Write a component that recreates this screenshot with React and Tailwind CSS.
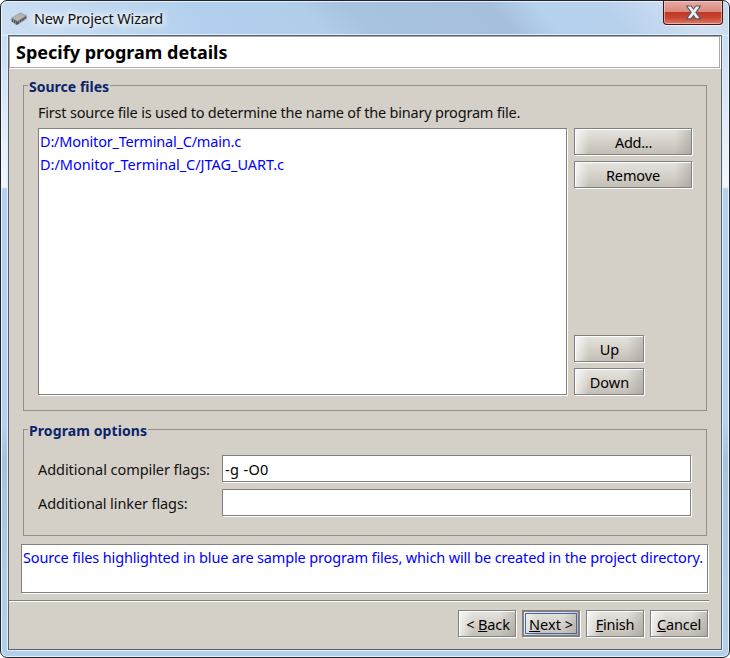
import React from "react";

function Button({ className = "", focused = false, children }) {
  return (
    <button
      className={`relative h-[27px] shrink-0 border border-[#808080] bg-[linear-gradient(90deg,rgba(255,255,255,0.7)_0px,rgba(255,255,255,0)_14px),linear-gradient(270deg,rgba(148,144,135,0.42)_0px,rgba(160,156,148,0)_16px),linear-gradient(180deg,#e6e4df_0%,#d8d4cd_45%,#c3beb5_100%)] text-center text-[14.5px] leading-[25px] text-black shadow-[1px_1px_0_#fff,inset_1px_1px_0_#fff] ${className}`}
    >
      {focused && (
        <span className="pointer-events-none absolute inset-0 border border-[#808080]">
          <span className="absolute inset-px border border-[#4468b4]" />
        </span>
      )}
      <span className="relative top-px">{children}</span>
    </button>
  );
}

function Group({ title, titleClass, className, children }) {
  return (
    <section className={`relative ml-[14px] w-[684px] border border-[#919089] ${className}`}>
      <h2
        className={`absolute -top-[9px] left-1 h-5 whitespace-nowrap bg-[#d4d0c8] pl-px text-[14px] leading-5 font-bold text-[#0a246a] ${titleClass}`}
      >
        {title}
      </h2>
      {children}
    </section>
  );
}

function TitleBar() {
  return (
    <header className="flex h-[33px] items-start">
      <svg className="mt-[11px] ml-[10px] shrink-0" width="16" height="14" viewBox="0 0 16 14">
        <path d="M.5 7 9.5 1.2 15.5 4v2.5L6 13 .5 9.5Z" fill="#505050" />
        <path d="M.5 6.2 9.2 1 15.6 3.6 6.6 9.4Z" fill="#b4b4b4" stroke="#8a8a8a" strokeWidth=".6" />
        <path d="M2.5 8v2.8M4.7 9.4v3M8.5 9v2.6M10.8 7.6V10M13.2 6.2v2.4" stroke="#9a9a9a" strokeWidth=".9" />
      </svg>
      <h1 className="mt-[7px] ml-[7px] w-[129px] whitespace-nowrap text-[14.5px] leading-5 tracking-[-0.16px] text-[#111] [text-shadow:0_0_6px_#fff,0_0_9px_#fff,0_0_12px_#fff]">
        New Project Wizard
      </h1>
      <button className="ml-auto mr-[6px] flex h-[24px] w-[60px] items-center justify-center rounded-b-[4px] border border-t-0 border-[#411512] bg-[linear-gradient(180deg,#e9aaa1_0%,#d9897e_48%,#bd3a25_50%,#c94431_72%,#dc7a64_100%)] shadow-[inset_0_0_0_1px_rgba(255,220,212,0.55),0_1px_0_#edf4fb]">
        <svg width="17" height="15" viewBox="0 0 17 15">
          <path
            d="M1.5 1h4.6l2.4 3 2.4-3h4.6l-4.6 6.4 4.7 6.4h-4.7l-2.4-3.2L6 13.8H1.4L6.1 7.4Z"
            fill="#f1f1f1"
            stroke="#565a68"
            strokeWidth="1.2"
            strokeLinejoin="round"
          />
        </svg>
      </button>
    </header>
  );
}

export default function App() {
  return (
    <div className="h-[658px] w-[730px] overflow-hidden bg-white font-['Noto_Sans','Open_Sans',sans-serif]">
      <div className="h-full rounded-[7px] border border-[#20242e] bg-[linear-gradient(180deg,transparent_34px,#c9dcf1_35px,#f3f7fc_186px,#b3d0ee_188px,#b6d2ee_420px,#a8c2de_460px,#b3d0eb_640px),linear-gradient(50deg,#cddff1_0%,#c7dcf2_7%,#b2d0ed_28%,#b0cdea_43%,#a8c3df_49%,#a5bfdd_68%,#b6d1ed_74%,#b7d1ed_83%,#d0dff0_94%,#c3d7ed_100%)] bg-[length:100%_100%,100%_34px] bg-no-repeat shadow-[inset_0_0_0_1px_rgba(240,250,255,0.85)]">
        <TitleBar />
        <main className="ml-[6px] flex h-[617px] w-[716px] flex-col border border-[#e2eefa]">
          <div className="flex min-h-0 flex-1 flex-col border border-[#59636e] bg-[#d4d0c8]">
            <div className="mr-px h-[32px] shrink-0 border border-[#a9a9a9] bg-white shadow-[1px_1px_0_#fff]">
              <h2 className="ml-[6px] mt-[3px] whitespace-nowrap text-[18px] leading-6 font-bold text-black">
                Specify program details
              </h2>
            </div>

            <Group title="Source files" titleClass="w-[82px] tracking-[0.02px]" className="mt-[17px] h-[326px] shrink-0">
              <p className="ml-[14px] mt-[16px] h-[26px] whitespace-nowrap text-[14.5px] leading-5 tracking-[-0.21px] text-[#111]">
                First source file is used to determine the name of the binary program file.
              </p>
              <div className="ml-[14px] flex h-[267px] gap-[7px]">
                <ul className="w-[529px] border border-[#808080] bg-white pl-px pt-px text-[14.5px] text-[#0000ff] shadow-[1px_1px_0_#fff]">
                  <li className="h-[23px] leading-[23px] tracking-[-0.2px]">D:/Monitor_Terminal_C/main.c</li>
                  <li className="h-[23px] leading-[23px] tracking-[-0.03px]">D:/Monitor_Terminal_C/JTAG_UART.c</li>
                </ul>
                <div className="flex flex-col items-start">
                  <Button className="w-[118px] pl-px tracking-[-0.3px]">Add...</Button>
                  <Button className="mt-[6px] w-[118px] tracking-[-0.1px]">Remove</Button>
                  <Button className="mt-auto w-[70px] pl-px">Up</Button>
                  <Button className="mt-[6px] w-[70px] pl-px">Down</Button>
                </div>
              </div>
            </Group>

            <Group title="Program options" titleClass="w-[120px] tracking-[0.1px]" className="mt-[18px] h-[107px] shrink-0">
              <div className="ml-[14px] mt-[25px] flex flex-col gap-[7px]">
                <label className="flex h-[27px] items-center">
                  <span className="w-[184px] whitespace-nowrap pt-[2px] text-[14.5px] tracking-[-0.06px] text-[#111]">Additional compiler flags:</span>
                  <input
                    className="h-[27px] w-[469px] border border-[#808080] bg-white px-[2px] text-[14.5px] tracking-[0.35px] text-black shadow-[1px_1px_0_#fff] outline-none"
                    defaultValue="-g -O0"
                  />
                </label>
                <label className="flex h-[27px] items-center">
                  <span className="w-[184px] whitespace-nowrap pt-[2px] text-[14.5px] tracking-[-0.1px] text-[#111]">Additional linker flags:</span>
                  <input className="h-[27px] w-[469px] border border-[#808080] bg-white shadow-[1px_1px_0_#fff] outline-none" />
                </label>
              </div>
            </Group>

            <p className="ml-[12px] mt-[8px] h-[49px] w-[687px] shrink-0 whitespace-nowrap border border-[#808080] bg-white pl-px pt-[2px] text-[14.5px] leading-5 tracking-[-0.148px] text-[#0000ff] shadow-[1px_1px_0_#fff]">
              Source files highlighted in blue are sample program files, which will be created in the project directory.
            </p>
            <hr className="mt-[7px] mr-[12px] h-[2px] shrink-0 border-0 border-t border-[#808080] bg-white" />
            <footer className="mt-[8px] mr-[13px] flex justify-end gap-[6px]">
              <Button className="w-[58px] pl-[2px] tracking-[-0.1px]">&lt; <u>B</u>ack</Button>
              <Button className="w-[58px]" focused><u>N</u>ext &gt;</Button>
              <Button className="w-[58px] tracking-[-0.25px]"><u>F</u>inish</Button>
              <Button className="w-[58px] tracking-[-0.15px]"><u>C</u>ancel</Button>
            </footer>
          </div>
        </main>
      </div>
    </div>
  );
}
